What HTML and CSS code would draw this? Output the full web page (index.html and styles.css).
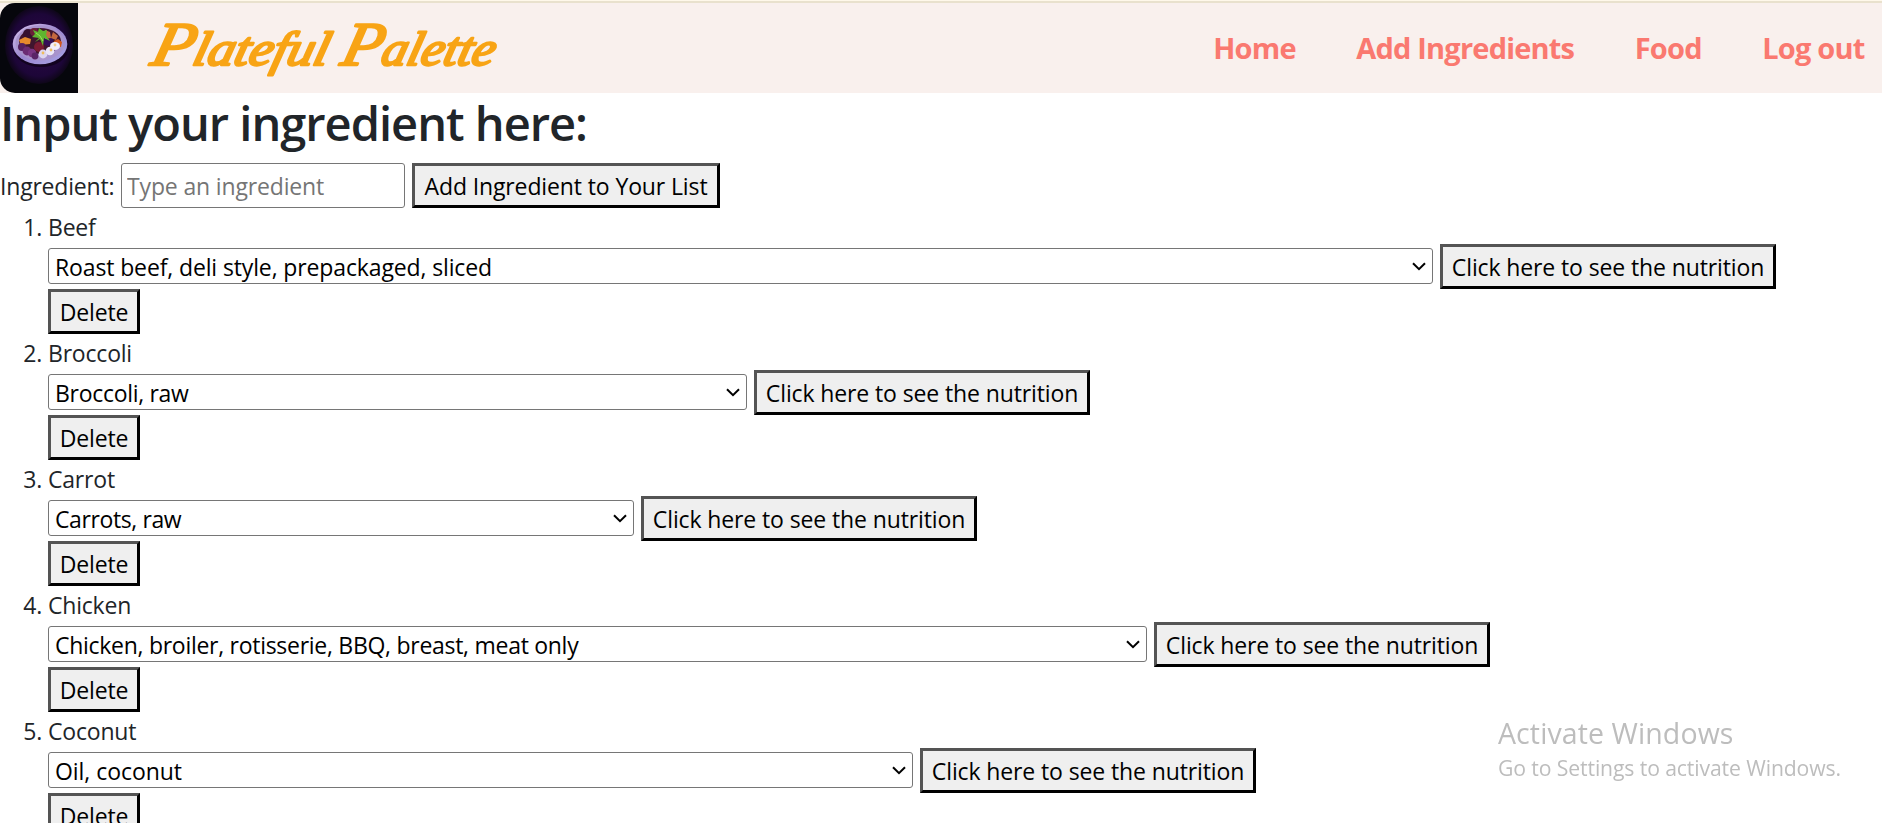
FILE: index.html
```
<!DOCTYPE html>
<html lang="en">
<head>
<meta charset="utf-8">
<title>Plateful Palette</title>
<link rel="stylesheet" href="styles.css">
</head>
<body>
<header class="navbar">
  <svg class="logo" viewBox="0 0 78 90">
    <defs>
      <radialGradient id="glow"><stop offset="0" stop-color="#2c0848"/><stop offset=".8" stop-color="#1d0638"/><stop offset="1" stop-color="#0e0618"/></radialGradient>
      <linearGradient id="rim" x2="1" y2="1"><stop offset="0" stop-color="#d9c3ee"/><stop offset=".5" stop-color="#9a86cf"/><stop offset="1" stop-color="#a9a5e6"/></linearGradient>
    </defs>
    <rect width="78" height="90" fill="#06060c"/>
    <ellipse cx="39" cy="42" rx="34" ry="39" fill="url(#glow)"/>
    <ellipse cx="41" cy="44" rx="28" ry="20" fill="#12021f"/>
    <ellipse cx="40" cy="41" rx="27.3" ry="20.3" fill="url(#rim)"/>
    <ellipse cx="40" cy="40" rx="24.5" ry="17.5" fill="#a893cc"/>
    <ellipse cx="40" cy="38" rx="21" ry="13" fill="#40152e"/>
    <circle cx="28" cy="31" r="5" fill="#35102f"/>
    <circle cx="34" cy="29" r="4" fill="#6b1f38"/>
    <path d="M19 37l6-3 6 2-1 5-9 1z" fill="#e58a2c"/>
    <circle cx="22" cy="44" r="4" fill="#54205f"/>
    <circle cx="27" cy="48" r="4.4" fill="#6b2c73"/>
    <circle cx="32" cy="50" r="4.2" fill="#7a3583"/>
    <circle cx="35" cy="53" r="3.4" fill="#5a2467"/>
    <circle cx="39" cy="44" r="5" fill="#7b1b33"/>
    <circle cx="48" cy="38" r="5" fill="#351059"/>
    <path d="M45 27l5 2 1 6-6 1zM53 29l5 4-2 4-5-2z" fill="#c4683f"/>
    <path d="M54 38l4-2 4 3-1 5-6-1z" fill="#d2571f"/>
    <path d="M39 35l-7-1 3-3-2-4 5 2 1-4 4 3 4-1-1 5 4 6-6-3-1 8-3-7-5 3z" fill="#5fb52f"/>
    <path d="M36 30l4 3 3 5" fill="none" stroke="#9add5b"/>
    <circle cx="43" cy="51" r="4.4" fill="#ddd6ef"/><circle cx="50" cy="48" r="4.3" fill="#ebe6f7"/><ellipse cx="55" cy="43" rx="5" ry="4" fill="#f3eefa"/>
    <circle cx="43" cy="50" r="1.4" fill="#efbd5c"/><circle cx="51" cy="47" r="1.4" fill="#efbd5c"/><circle cx="55" cy="42" r="1.4" fill="#f0ce8c"/>
  </svg>
  <svg class="brand" viewBox="0 0 360 90"><g transform="translate(0 62) skewX(-14)"><text x="5" textLength="177" lengthAdjust="spacingAndGlyphs"><tspan class="cap">P</tspan>lateful</text><text x="195" textLength="153" lengthAdjust="spacingAndGlyphs"><tspan class="cap">P</tspan>alette</text></g></svg>
  <nav class="links"><a>Home</a><a>Add Ingredients</a><a>Food</a><a>Log out</a></nav>
</header>
<main>
  <h1>Input your ingredient here:</h1>
  <form class="entry"><label>Ingredient:</label><input type="text" placeholder="Type an ingredient"><button type="button" class="add">Add Ingredient to Your List</button></form>
  <ol class="list">
    <li><div class="name"><span class="num">1.</span>Beef</div><div class="row"><div class="select w1">Roast beef, deli style, prepackaged, sliced<svg class="chev" viewBox="0 0 14 9"><path d="M1 1.2l6 6 6-6"/></svg></div><button class="see">Click here to see the nutrition</button></div><button class="del">Delete</button></li>
    <li><div class="name"><span class="num">2.</span>Broccoli</div><div class="row"><div class="select w2">Broccoli, raw<svg class="chev" viewBox="0 0 14 9"><path d="M1 1.2l6 6 6-6"/></svg></div><button class="see">Click here to see the nutrition</button></div><button class="del">Delete</button></li>
    <li><div class="name"><span class="num">3.</span>Carrot</div><div class="row"><div class="select w3">Carrots, raw<svg class="chev" viewBox="0 0 14 9"><path d="M1 1.2l6 6 6-6"/></svg></div><button class="see">Click here to see the nutrition</button></div><button class="del">Delete</button></li>
    <li><div class="name"><span class="num">4.</span>Chicken</div><div class="row"><div class="select w4">Chicken, broiler, rotisserie, BBQ, breast, meat only<svg class="chev" viewBox="0 0 14 9"><path d="M1 1.2l6 6 6-6"/></svg></div><button class="see">Click here to see the nutrition</button></div><button class="del">Delete</button></li>
    <li><div class="name"><span class="num">5.</span>Coconut</div><div class="row"><div class="select w5">Oil, coconut<svg class="chev" viewBox="0 0 14 9"><path d="M1 1.2l6 6 6-6"/></svg></div><button class="see">Click here to see the nutrition</button></div><button class="del">Delete</button></li>
  </ol>
</main>
<aside class="notice"><div class="big">Activate Windows</div><div class="small">Go to Settings to activate Windows.</div></aside>
</body>
</html>
```
FILE: styles.css
```
* { box-sizing: border-box; }
html, body { height: 100%; overflow: hidden; }
body { margin: 0; background: #fff; color: #212529; font: 23px/36px "Open Sans", "Noto Sans", sans-serif; letter-spacing: -0.2px; }
.navbar { display: flex; height: 93px; padding-top: 3px; background: linear-gradient(#fff8ea 0 1px, #e9e1cd 1px 3px, #f9f0ed 3px); }
.logo { width: 78px; height: 90px; border-radius: 15px 0 0 15px; }
.brand { width: 360px; height: 90px; margin-left: 66px; }
.brand text { font: italic 400 48px "Liberation Serif", serif; fill: #f8a415; stroke: #f8a415; stroke-width: 2.4; stroke-linejoin: round; }
.brand .cap { font-size: 62px; }
.links { display: flex; gap: 60.5px; margin: 0 16px 0 auto; font-size: 29px; font-weight: 700; line-height: 90px; letter-spacing: -0.8px; color: #fa7970; white-space: nowrap; }
.links { margin-right: 17.5px; }
h1 { margin: 0; height: 70px; padding-top: 1px; font-size: 47px; font-weight: 600; line-height: 58px; letter-spacing: -1px; white-space: nowrap; }
.entry { display: flex; height: 45px; margin: 0; }
label { width: 121px; line-height: 47px; white-space: nowrap; }
input { width: 284px; height: 45px; margin-right: 7px; padding: 0 5px; border: 1px solid #767676; border-radius: 3px; font: inherit; letter-spacing: -0.15px; }
input::placeholder { color: #757575; }
button { display: block; height: 45px; padding: 0; border: 3px outset #000; border-radius: 0; background: #efefef; color: #000; font: inherit; letter-spacing: -0.12px; white-space: nowrap; }
.add { width: 308px; }
.list { margin: 0; padding: 0 0 0 48px; list-style: none; }
.list li { height: 126px; }
.name { position: relative; height: 36px; line-height: 38px; }
.num { position: absolute; right: calc(100% + 6px); }
.row { display: flex; align-items: center; gap: 7px; height: 45px; }
.select { position: relative; height: 36px; margin-bottom: 1px; padding-left: 6px; border: 1px solid #767676; border-radius: 3px; line-height: 37px; color: #000; white-space: nowrap; }
.w1 { width: 1385px; letter-spacing: -0.13px; }
.w2 { width: 699px; letter-spacing: -0.3px; }
.w3 { width: 586px; letter-spacing: -0.4px; }
.w4 { width: 1099px; letter-spacing: -0.28px; }
.w5 { width: 865px; letter-spacing: -0.05px; }
.chev { position: absolute; right: 6px; top: 13px; width: 14px; height: 9px; fill: none; stroke: #000; stroke-width: 2; }
.see { width: 336px; }
.del { width: 92px; }
.notice { position: fixed; left: 1498px; top: 713px; color: #bdbdbd; white-space: nowrap; }
.big { font-size: 28.5px; line-height: 40px; letter-spacing: 0.1px; }
.small { font-size: 21.2px; line-height: 30px; letter-spacing: -0.12px; }
```
